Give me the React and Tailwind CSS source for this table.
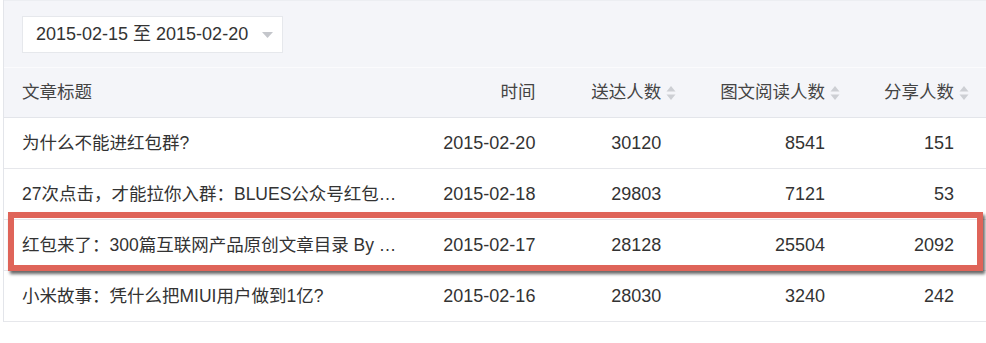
import React from "react";

const rows = [
  { title: "为什么不能进红包群?", date: "2015-02-20", a: "30120", b: "8541", c: "151" },
  { title: "27次点击，才能拉你入群：BLUES公众号红包群规则说明", date: "2015-02-18", a: "29803", b: "7121", c: "53" },
  { title: "红包来了：300篇互联网产品原创文章目录 By BLUES", date: "2015-02-17", a: "28128", b: "25504", c: "2092" },
  { title: "小米故事：凭什么把MIUI用户做到1亿?", date: "2015-02-16", a: "28030", b: "3240", c: "242" },
];

function SortIcon() {
  return (
    <svg width="10" height="16" viewBox="0 0 10 16" className="ml-[5px] -mr-[15px] shrink-0">
      <path d="M5 1 L9.5 6.5 L0.5 6.5 Z" fill="#cdcfd4" />
      <path d="M5 15 L9.5 9.5 L0.5 9.5 Z" fill="#cdcfd4" />
    </svg>
  );
}

export default function App() {
  const font = { fontFamily: '"Liberation Sans", "Noto Sans CJK SC", sans-serif' };
  return (
    <div className="w-[986px] h-[343px] bg-white overflow-hidden relative" style={font}>
      <div className="ml-[3px] border-l border-[#e3e5ea]">
        <div className="h-[67px] bg-[#f4f5f9] border-t border-[#eceef2] pl-[18px] pt-[15px]">
          <div className="w-[261px] h-[37px] bg-white border border-[#e6e8ec] flex items-center pl-[13px] text-[18px] text-[#333]">
            <span>2015-02-15 至 2015-02-20</span>
            <svg width="11" height="6" viewBox="0 0 11 6" className="ml-[14px]">
              <path d="M0 0 L11 0 L5.5 6 Z" fill="#c4c6cb" />
            </svg>
          </div>
        </div>
        <div className="h-[1px] bg-[#fbfbfd]" />
        <div className="h-[50px] bg-[#f4f5f9] border-b border-[#e3e5ea] flex items-center text-[17.5px] text-[#444]">
          <div className="w-[402px] pl-[18px]">文章标题</div>
          <div className="w-[162px] pr-[32px] text-right">时间</div>
          <div className="w-[126px] pr-[32px] flex justify-end items-center">
            <span>送达人数</span>
            <SortIcon />
          </div>
          <div className="w-[164px] pr-[32px] flex justify-end items-center">
            <span>图文阅读人数</span>
            <SortIcon />
          </div>
          <div className="w-[129px] pr-[32px] flex justify-end items-center">
            <span>分享人数</span>
            <SortIcon />
          </div>
        </div>
        {rows.map((r, i) => (
          <div key={i} className="h-[51px] border-b border-[#e6e7eb] flex items-center text-[18px] text-[#333]">
            <div className="w-[402px] pl-[18px] pr-[4px] truncate text-[17.5px]">{r.title}</div>
            <div className="w-[162px] pr-[32px] text-right">{r.date}</div>
            <div className="w-[126px] pr-[32px] text-right">{r.a}</div>
            <div className="w-[164px] pr-[32px] text-right">{r.b}</div>
            <div className="w-[129px] pr-[32px] text-right">{r.c}</div>
          </div>
        ))}
      </div>
      <div className="absolute left-[8px] top-[212px] w-[975px] h-[59px] border-[6px] border-[#df6459] shadow-[2px_3px_3px_rgba(0,0,0,0.6)]" />
    </div>
  );
}
